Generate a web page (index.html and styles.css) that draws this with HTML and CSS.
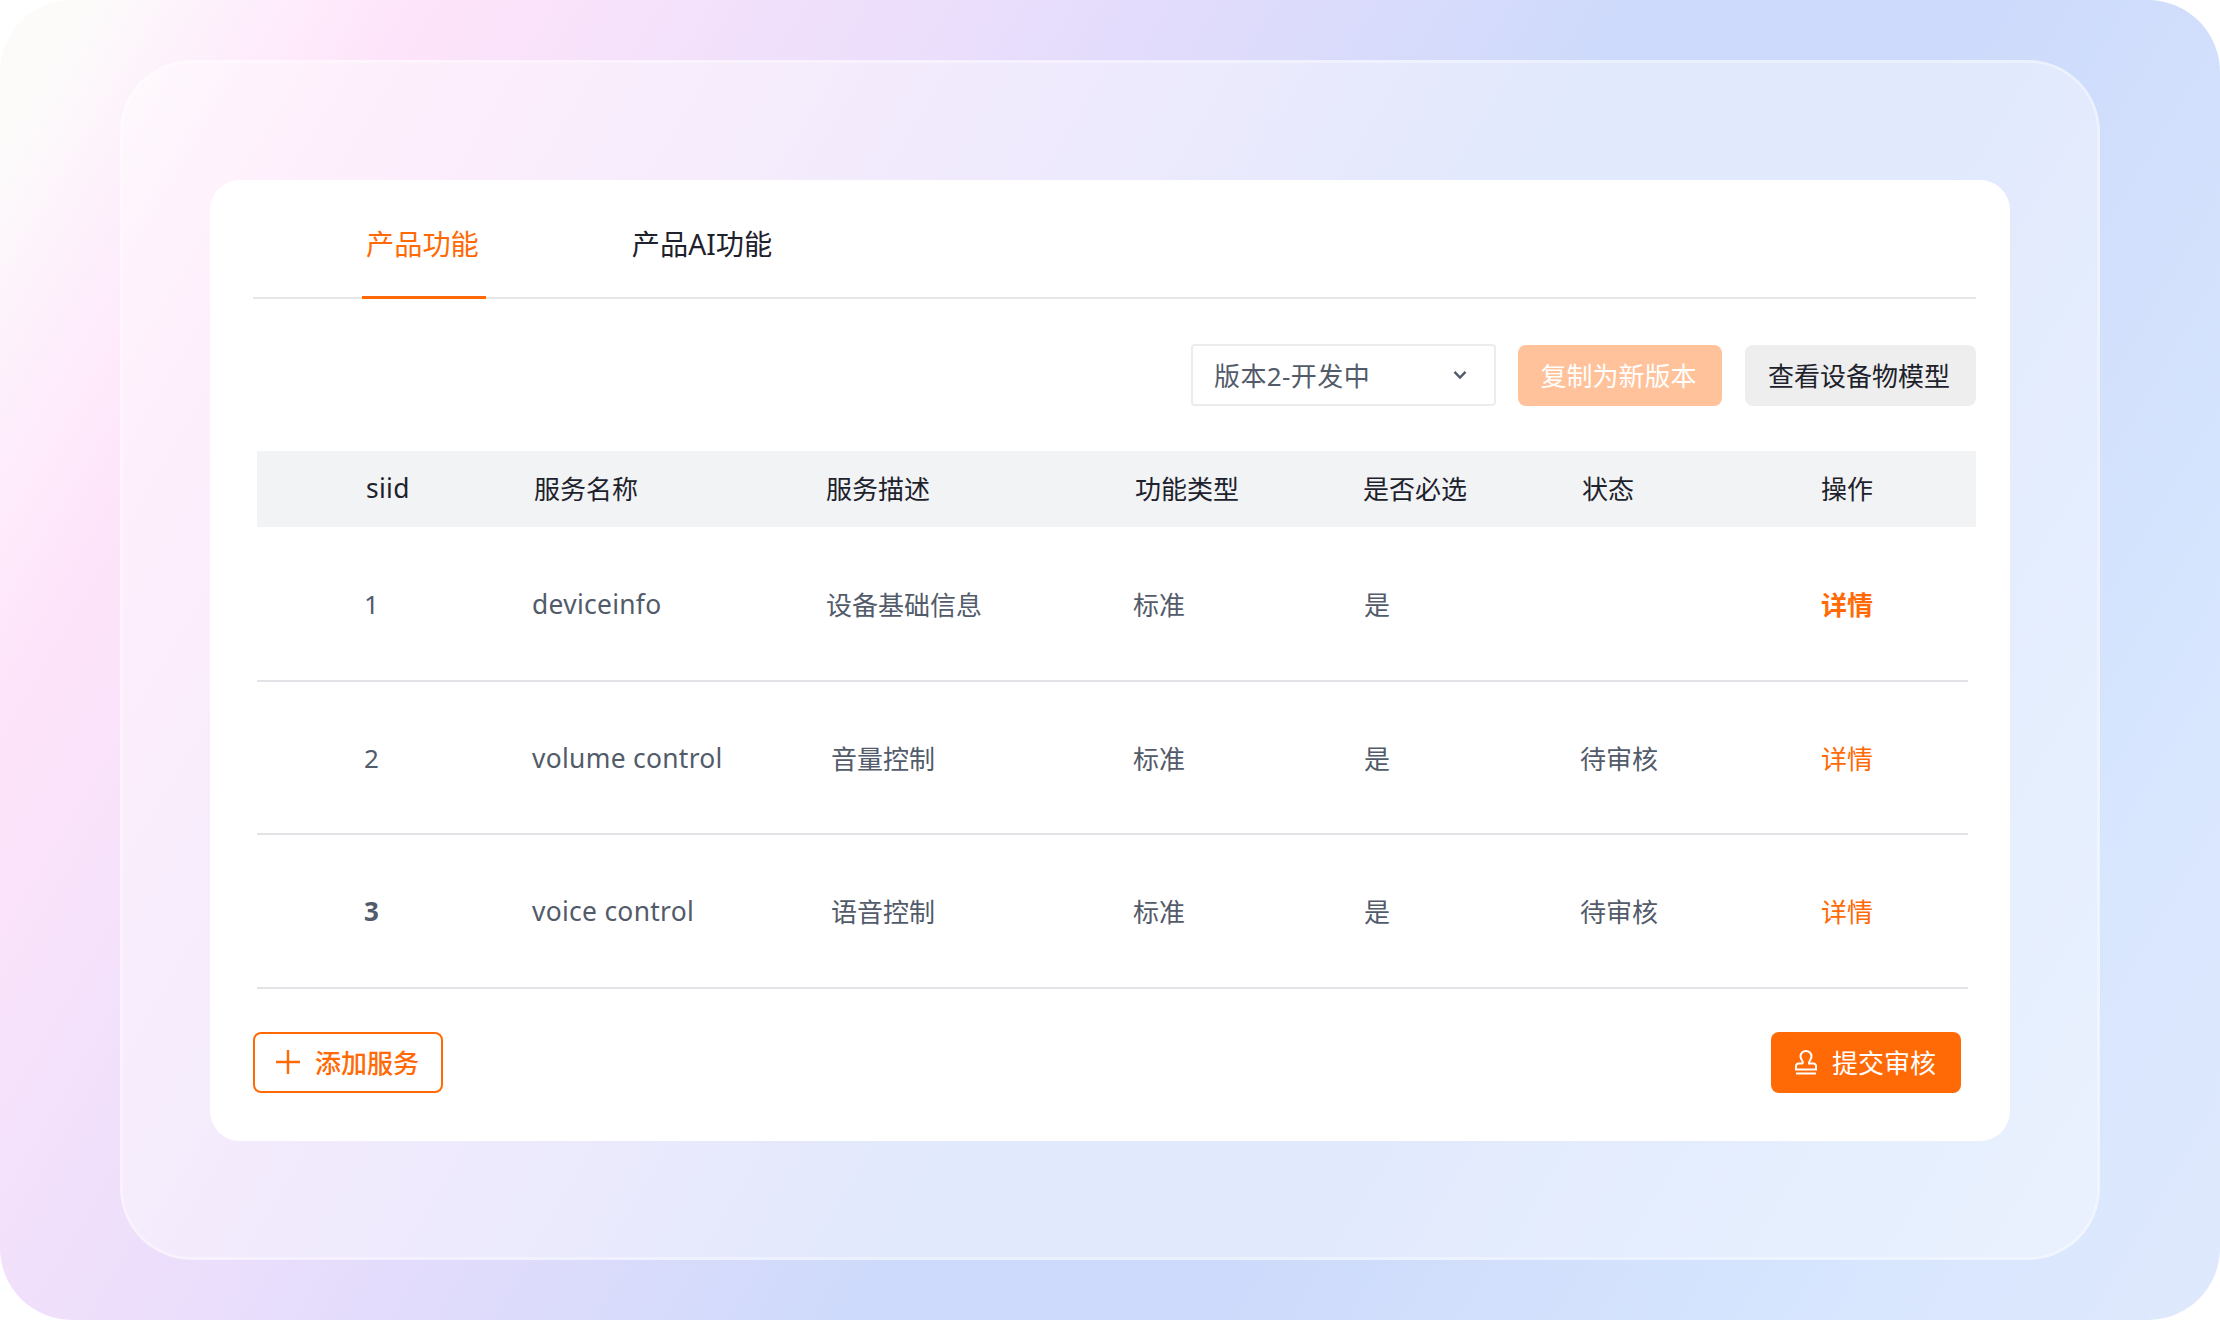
FILE: index.html
```
<!DOCTYPE html>
<html lang="zh-CN">
<head>
  <meta charset="UTF-8">
  <meta name="viewport" content="width=device-width, initial-scale=1.0">
  <title>产品功能</title>
  <link rel="stylesheet" href="styles.css">
</head>
<body>
  <div class="backdrop">
    <div class="frame">
      <main class="card">
        <nav class="tabs">
          <a class="tab active">产品功能</a>
          <a class="tab">产品AI功能</a>
        </nav>

        <div class="toolbar">
          <div class="select">
            <span>版本2-开发中</span>
            <svg class="chevron" width="14" height="10" viewBox="0 0 14 10"><path d="M1.5 1.8 7 7.6l5.5-5.8" /></svg>
          </div>
          <button class="btn btn-copy">复制为新版本</button>
          <button class="btn btn-view">查看设备物模型</button>
        </div>

        <div class="table">
          <div class="row head">
            <span class="name">siid</span>
            <span>服务名称</span>
            <span>服务描述</span>
            <span>功能类型</span>
            <span>是否必选</span>
            <span>状态</span>
            <span>操作</span>
          </div>
          <div class="row">
            <span>1</span>
            <span class="name">deviceinfo</span>
            <span>设备基础信息</span>
            <span>标准</span>
            <span>是</span>
            <span></span>
            <a class="link strong">详情</a>
          </div>
          <div class="row">
            <span>2</span>
            <span class="name">volume control</span>
            <span class="indent">音量控制</span>
            <span>标准</span>
            <span>是</span>
            <span>待审核</span>
            <a class="link">详情</a>
          </div>
          <div class="row">
            <span class="strong">3</span>
            <span class="name">voice control</span>
            <span class="indent">语音控制</span>
            <span>标准</span>
            <span>是</span>
            <span>待审核</span>
            <a class="link">详情</a>
          </div>
        </div>

        <div class="footer">
          <button class="btn btn-add">
            <svg width="24" height="24" viewBox="0 0 24 24"><path d="M12 0v24M0 12h24" /></svg>
            添加服务
          </button>
          <button class="btn btn-submit">
            <svg width="22" height="25" viewBox="0 0 22 25"><path d="M8 13.5C8 10.5 5.5 9.5 5.5 6.3a5.5 5.3 0 0 1 11 0C16.5 9.5 14 10.5 14 13.5h4.5a2.5 2.5 0 0 1 2.5 2.5v3.5H1V16a2.5 2.5 0 0 1 2.5-2.5h4.5M1 23.5h20" /></svg>
            提交审核
          </button>
        </div>
      </main>
    </div>
  </div>
</body>
</html>
```
FILE: styles.css
```
* {
  box-sizing: border-box;
}
body {
  margin: 0;
  background: #fff;
  font-family: "Noto Sans", "Noto Sans CJK SC", sans-serif;
  font-size: 26px;
  color: #1d222c;
}
.backdrop {
  width: 2220px;
  height: 1320px;
  padding: 60px 120px;
  border-radius: 72px;
  background: linear-gradient(120.7deg, #fcfbfa 3%, #feedfc 9%, #fee4fa 14%, #e4dcfc 38%, #cddafb 55%, #cddafb 66%, #d6e5fe 85%, #dfe9fd 100%);
}
.frame {
  height: 1200px;
  padding: 117px 87px;
  border: 3px solid rgba(255, 255, 255, 0.6);
  border-radius: 72px;
  background: rgba(255, 255, 255, 0.4);
  background-clip: padding-box;
}
.card {
  height: 961px;
  padding: 0 34px 0 43px;
  border-radius: 30px;
  background: #fff;
}
.tabs {
  display: flex;
  height: 119px;
  padding-left: 109px;
  border-bottom: 2px solid #e6e6e6;
  gap: 142px;
}
.tab {
  height: 119px;
  padding: 0 4px;
  font-size: 28.2px;
  line-height: 128px;
}
.tab.active {
  padding: 0 7px 0 4px;
  color: #ff6a06;
  border-bottom: 3px solid #ff6a06;
}
.toolbar {
  display: flex;
  justify-content: flex-end;
  align-items: center;
  height: 62px;
  margin-top: 45px;
}
.select {
  display: flex;
  justify-content: space-between;
  align-items: center;
  width: 305px;
  height: 62px;
  margin-right: 22px;
  padding: 0 27px 0 21px;
  border: 2px solid #ececec;
  border-radius: 4px;
  color: #525b6a;
  letter-spacing: 0.4px;
}
svg {
  fill: none;
  stroke: currentColor;
  stroke-width: 2.4;
}
.btn {
  display: flex;
  justify-content: center;
  align-items: center;
  height: 61px;
  padding: 0 3px 1px 0;
  border: none;
  border-radius: 8px;
  font: inherit;
}
.btn-copy {
  width: 204px;
  margin-right: 23px;
  background: #ffc29a;
  color: #fff;
}
.btn-view {
  width: 231px;
  background: #eee;
  color: #1d222c;
}
.table {
  margin: 45px 0 0 4px;
}
.row {
  display: grid;
  grid-template-columns: 168px 294px 307px 231px 216px 241px 1fr;
  align-items: center;
  width: 1711px;
  height: 153.5px;
  padding: 1px 0 0 107px;
  border-bottom: 2px solid #e2e3e6;
  color: #525b6a;
}
.row.head {
  grid-template-columns: 168px 292px 309px 228px 219px 239px 1fr;
  width: 1719px;
  height: 76px;
  margin-bottom: 1px;
  padding: 0 0 2px 109px;
  border: none;
  background: #f2f3f5;
  color: #1d222c;
}
.name {
  font-size: 26.4px;
  letter-spacing: 0.3px;
}
.indent {
  padding-left: 5px;
}
.link {
  color: #ff6a06;
}
.strong {
  font-weight: 700;
}
.footer {
  display: flex;
  justify-content: space-between;
  margin: 43px 15px 0 0;
}
.footer .btn {
  width: 190px;
  padding: 0 1px 0 0;
  gap: 15px;
}
.btn-add {
  border: 2px solid #ff6a06;
  background: #fff;
  color: #ff6a06;
  font-weight: 500;
}
.btn-submit {
  background: #ff6a06;
  color: #fff;
}
.btn-submit svg {
  stroke-width: 2;
}
```
